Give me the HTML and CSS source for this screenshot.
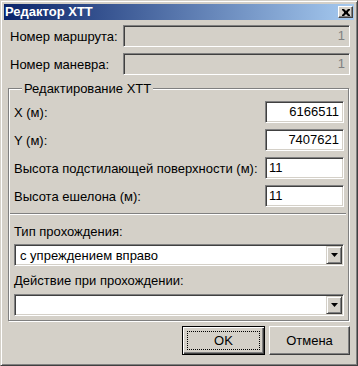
FILE: index.html
```html
<!DOCTYPE html>
<html lang="ru">
<head>
<meta charset="utf-8">
<title>Редактор ХТТ</title>
<link rel="stylesheet" href="styles.css">
</head>
<body>
<div class="window">
  <div class="titlebar">
    <span class="title">Редактор ХТТ</span>
    <span class="close"><svg width="8" height="7" viewBox="0 0 8 7"><path d="M0 0h2l2 2 2-2h2v1L6 3v1l2 2v1H6L4 5 2 7H0V6l2-2V3L0 1z" fill="#000"/></svg></span>
  </div>
  <div class="content">
    <div class="top-row"><span class="top-label">Номер маршрута:</span><div class="edit disabled wide">1</div></div>
    <div class="top-row"><span class="top-label">Номер маневра:</span><div class="edit disabled wide">1</div></div>
    <fieldset class="group">
      <legend class="legend">Редактирование ХТТ</legend>
      <div class="coords">
        <div class="crow"><span>X (м):</span><div class="edit num">6166511</div></div>
        <div class="crow"><span>Y (м):</span><div class="edit num">7407621</div></div>
        <div class="crow"><span>Высота подстилающей поверхности (м):</span><div class="edit">11</div></div>
        <div class="crow"><span>Высота ешелона (м):</span><div class="edit">11</div></div>
      </div>
      <div class="sep"></div>
      <div class="lbl first">Тип прохождения:</div>
      <div class="combo"><span class="combo-text">с упреждением вправо</span><span class="drop"><svg width="7" height="4" viewBox="0 0 7 4"><path d="M0 0h7L3.5 4z" fill="#000"/></svg></span></div>
      <div class="lbl">Действие при прохождении:</div>
      <div class="combo"><span class="combo-text"></span><span class="drop"><svg width="7" height="4" viewBox="0 0 7 4"><path d="M0 0h7L3.5 4z" fill="#000"/></svg></span></div>
    </fieldset>
    <div class="buttons">
      <button class="btn default"><span class="focus">OK</span></button>
      <button class="btn cancel">Отмена</button>
    </div>
  </div>
</div>
</body>
</html>
```

FILE: styles.css
```css
* { box-sizing: border-box; }
html, body { margin: 0; padding: 0; }
body {
  background: #d4d0c8;
  font-family: "Liberation Sans", Arial, sans-serif;
  font-size: 13px;
  color: #000;
}
.window {
  width: 358px;
  height: 366px;
  background: #d4d0c8;
  border: 1px solid;
  border-color: #d4d0c8 #404040 #404040 #d4d0c8;
  box-shadow: inset 1px 1px #fff, inset -1px -1px #808080;
  padding: 3px;
  display: flex;
  flex-direction: column;
}
.titlebar {
  height: 16px;
  background: linear-gradient(to right, #0a246a, #a6caf0);
  display: flex;
  align-items: center;
  justify-content: space-between;
  padding: 0 1px 0 1px;
}
.title {
  color: #fff;
  font-weight: bold;
  font-size: 13px;
  line-height: 16px;
}
.close {
  width: 15px;
  height: 12px;
  background: #d4d0c8;
  border: 1px solid;
  border-color: #fff #404040 #404040 #fff;
  box-shadow: inset -1px -1px #808080;
  display: flex;
  align-items: center;
  justify-content: center;
}
.content {
  padding-top: 5px;
}
.top-row {
  display: flex;
  align-items: center;
  height: 22px;
  margin: 0 4px 6px 6px;
}
.top-label { width: 113px; }
.edit {
  height: 22px;
  width: 79px;
  border: 1px solid;
  border-color: #808080 #fff #fff #808080;
  box-shadow: inset 1px 1px #404040, inset -1px -1px #d4d0c8;
  background: #fff;
  padding: 0 4px 0 3px;
  line-height: 20px;
}
.edit.wide { flex: 1; width: auto; }
.edit.disabled { background: #d4d0c8; color: #808080; text-align: right; }
.edit.num { text-align: right; }
.group {
  margin: 2px 5px 0 4px;
  border: 1px solid #808080;
  box-shadow: 1px 1px #fff, inset 1px 1px #fff;
  padding: 5px 4px 4px 5px;
  min-width: 0;
}
.legend {
  margin-left: 8px;
  padding: 0 2px;
  line-height: 15px;
  background: #d4d0c8;
}
.coords {
  display: flex;
  flex-direction: column;
  gap: 6px;
}
.crow {
  display: flex;
  align-items: center;
  justify-content: space-between;
  height: 22px;
}
.sep {
  height: 2px;
  border-top: 1px solid #808080;
  border-bottom: 1px solid #fff;
  margin: 6px -2px 0 -4px;
}
.lbl {
  line-height: 15px;
  margin: 7px 0 6px;
}
.lbl.first { margin: 9px 0 5px; }
.combo {
  height: 22px;
  border: 1px solid;
  border-color: #808080 #fff #fff #808080;
  box-shadow: inset 1px 1px #404040, inset -1px -1px #d4d0c8;
  background: #fff;
  display: flex;
  align-items: center;
  padding: 1px;
}
.combo-text { flex: 1; padding-left: 4px; }
.drop {
  width: 16px;
  height: 18px;
  background: #d4d0c8;
  border: 1px solid;
  border-color: #d4d0c8 #404040 #404040 #d4d0c8;
  box-shadow: inset 1px 1px #fff, inset -1px -1px #808080;
  display: flex;
  align-items: center;
  justify-content: center;
}
.buttons {
  display: flex;
  justify-content: flex-end;
  gap: 4px;
  margin: 5px 4px 0 0;
}
.btn {
  height: 29px;
  font-family: "Liberation Sans", Arial, sans-serif;
  font-size: 13px;
  color: #000;
  background: #d4d0c8;
  border: 1px solid;
  border-color: #fff #404040 #404040 #fff;
  box-shadow: inset -1px -1px #808080;
  padding: 0;
  display: flex;
  align-items: center;
  justify-content: center;
}
.btn.default {
  width: 83px;
  border-color: #000;
  box-shadow: inset 1px 1px #fff, inset -1px -1px #404040, inset -2px -2px #808080;
  padding: 4px;
}
.focus {
  flex: 1;
  align-self: stretch;
  border: 1px dotted #000;
  display: flex;
  align-items: center;
  justify-content: center;
}
.btn.cancel { width: 81px; }
```
